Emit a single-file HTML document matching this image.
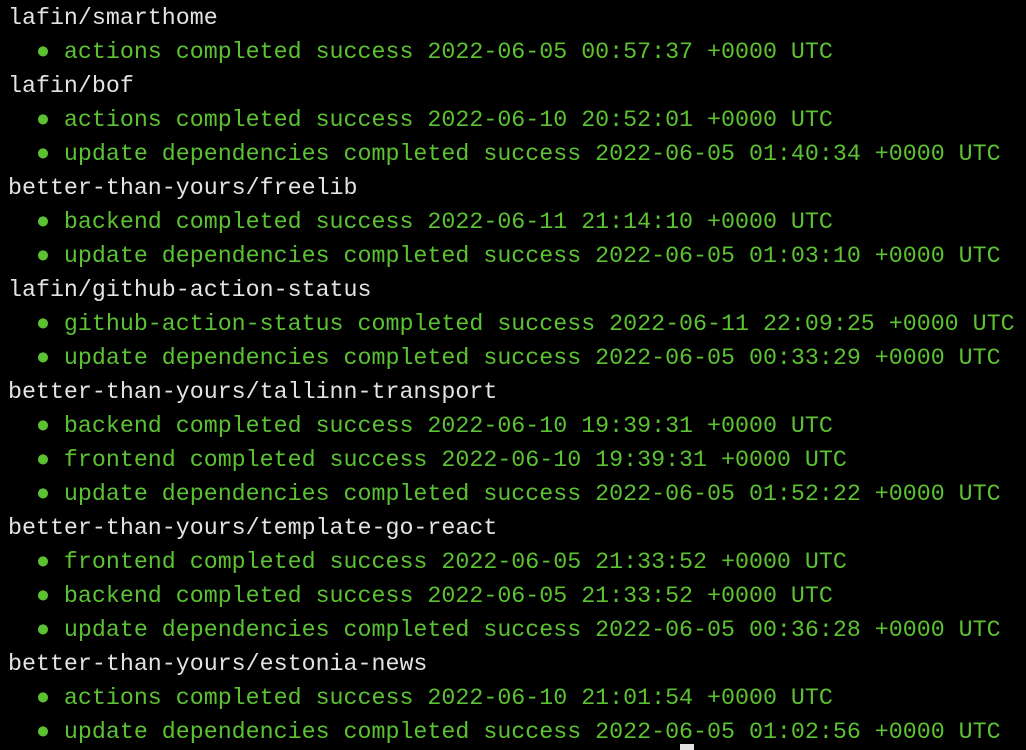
<!DOCTYPE html>
<html><head><style>
html,body{margin:0;padding:0;background:#000;width:1026px;height:750px;overflow:hidden}
pre{margin:0;position:absolute;left:8px;top:1px;font-family:"Liberation Mono",monospace;font-size:23.3px;line-height:34px;color:#e3e3e3;white-space:pre}
.g{color:#5cc234}
.c{position:absolute;left:680px;top:744px;width:14px;height:6px;background:#e3e3e3}
</style></head><body>
<pre>lafin/smarthome
<span class="g">  ● actions completed success 2022-06-05 00:57:37 +0000 UTC</span>
lafin/bof
<span class="g">  ● actions completed success 2022-06-10 20:52:01 +0000 UTC</span>
<span class="g">  ● update dependencies completed success 2022-06-05 01:40:34 +0000 UTC</span>
better-than-yours/freelib
<span class="g">  ● backend completed success 2022-06-11 21:14:10 +0000 UTC</span>
<span class="g">  ● update dependencies completed success 2022-06-05 01:03:10 +0000 UTC</span>
lafin/github-action-status
<span class="g">  ● github-action-status completed success 2022-06-11 22:09:25 +0000 UTC</span>
<span class="g">  ● update dependencies completed success 2022-06-05 00:33:29 +0000 UTC</span>
better-than-yours/tallinn-transport
<span class="g">  ● backend completed success 2022-06-10 19:39:31 +0000 UTC</span>
<span class="g">  ● frontend completed success 2022-06-10 19:39:31 +0000 UTC</span>
<span class="g">  ● update dependencies completed success 2022-06-05 01:52:22 +0000 UTC</span>
better-than-yours/template-go-react
<span class="g">  ● frontend completed success 2022-06-05 21:33:52 +0000 UTC</span>
<span class="g">  ● backend completed success 2022-06-05 21:33:52 +0000 UTC</span>
<span class="g">  ● update dependencies completed success 2022-06-05 00:36:28 +0000 UTC</span>
better-than-yours/estonia-news
<span class="g">  ● actions completed success 2022-06-10 21:01:54 +0000 UTC</span>
<span class="g">  ● update dependencies completed success 2022-06-05 01:02:56 +0000 UTC</span></pre>
<div class="c"></div>
</body></html>
